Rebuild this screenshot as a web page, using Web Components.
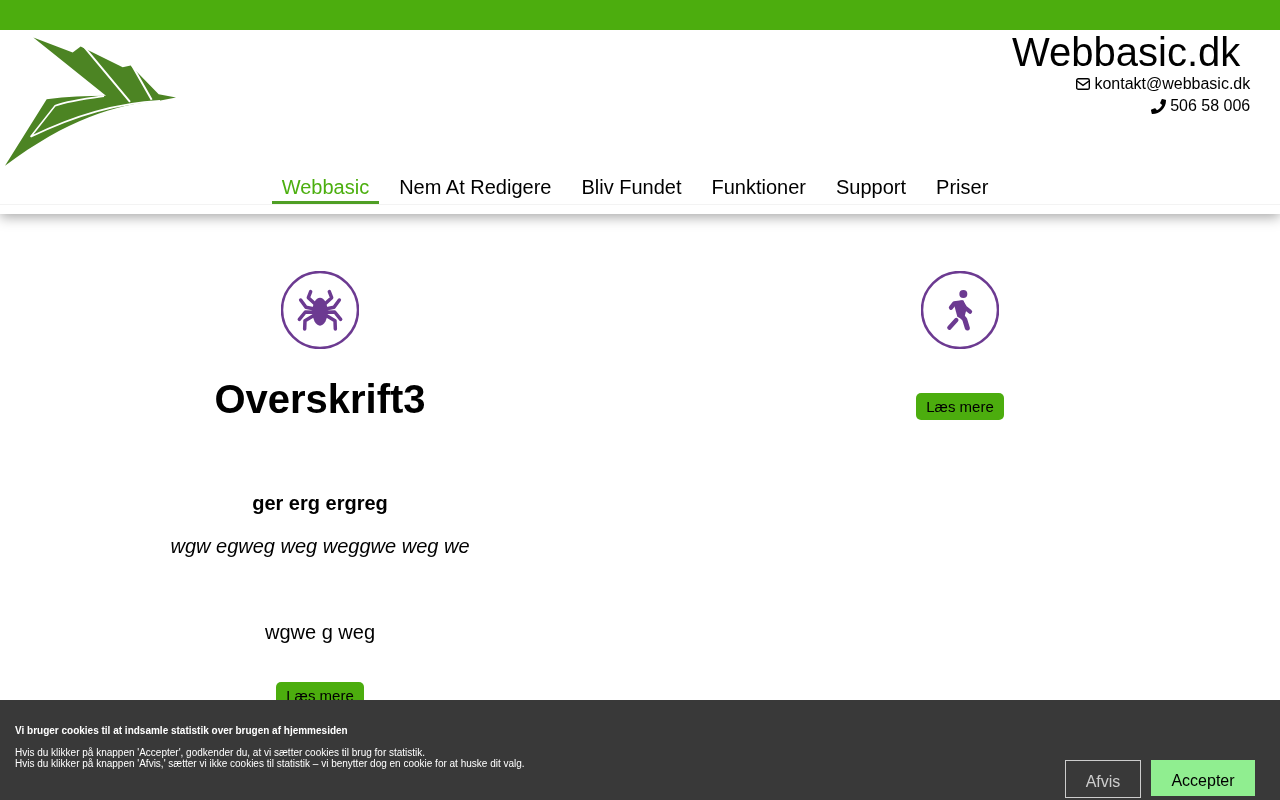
<!DOCTYPE html>
<html lang="da"><head><meta charset="utf-8"><title>Webbasic.dk</title>
<style>
html,body{margin:0;padding:0;height:800px;overflow:hidden;background:#fff;font-family:"Liberation Sans",Arial,sans-serif;color:#000}
</style></head><body>
<site-header></site-header>
<feature-grid>
  <feature-col>
    <icon-circle slot="icon" kind="spider"></icon-circle>
    <h-title>Overskrift3</h-title>
    <sub-title>ger erg ergreg</sub-title>
    <em-line>wgw egweg weg weggwe weg we</em-line>
    <plain-line>wgwe g weg</plain-line>
    <read-more>Læs mere</read-more>
  </feature-col>
  <feature-col>
    <icon-circle slot="icon" kind="walk"></icon-circle>
    <read-more class="near">Læs mere</read-more>
  </feature-col>
</feature-grid>
<cookie-bar></cookie-bar>
<script>
function def(name, css, html, extra){
  customElements.define(name, class extends HTMLElement{
    constructor(){super();this.attachShadow({mode:'open'}).innerHTML='<style>'+css+'</style>'+(typeof html==='function'?html(this):html);}
    connectedCallback(){ if(extra) extra(this); }
  });
}
def('nav-item',`:host{display:block;padding:0 10px;height:32px;line-height:30px;font-size:20px;border-bottom:3px solid transparent;box-sizing:border-box;white-space:nowrap;margin:0 5px}
:host([active]){color:#4caf0f;border-bottom-color:#4f9f25}`,'<slot></slot>');
def('site-header',`:host{display:block;height:214px;box-sizing:border-box;position:relative;z-index:1;box-shadow:0 3px 12px rgba(0,0,0,.35);background:#fff}
.top{height:30px;background:#4cad0e}
.mid{height:142px;display:flex;justify-content:space-between}
.logo{display:block;margin:7px 0 0 4px;width:174px;height:131px}
.info{padding-right:30px;text-align:right;font-size:16px;line-height:22px;will-change:transform}
.name{font-size:40px;line-height:44px;padding-right:10px;margin-bottom:-1px}
.line{display:flex;justify-content:flex-end;align-items:center;gap:4px}
svg.i{display:block}
nav{display:flex;justify-content:center;height:32px;padding-right:10px;will-change:transform}
.rule{height:10px;background:#fff;border-top:1px solid #f3f3f3;box-sizing:border-box}`,
`<div class="top"></div>
<div class="mid">
<svg class="logo" viewBox="12 36 522 388" aria-hidden="true">
<path fill="#4c8423" d="M100 35L218 80L242 62L368 124L392 119L476 205L528 215L470 226C350 235 200 280 15 420L140 220C200 212 260 210 318 210Z"/>
<path fill="none" stroke="#fff" stroke-width="6" d="M250 60L390 228M396 118L455 222"/>
<path fill="none" stroke="#fff" stroke-width="5" d="M480 225C340 232 210 275 92 333L165 240C205 225 260 218 312 211"/>
</svg>
<div class="info"><div class="name">Webbasic.dk</div>
<div class="line"><svg class="i" width="14" height="12" viewBox="0 0 14 12"><rect x=".7" y=".7" width="12.6" height="10.6" rx="1.6" fill="none" stroke="#000" stroke-width="1.4"/><path d="M1 3L7 7.4L13 3" fill="none" stroke="#000" stroke-width="1.4"/></svg><span>kontakt@webbasic.dk</span></div>
<div class="line"><svg class="i" width="15" height="15" viewBox="0 0 512 512"><path d="M493.4 24.6l-104-24c-11.3-2.6-22.9 3.3-27.5 13.9l-48 112c-4.2 9.8-1.4 21.3 6.9 28l60.6 49.6c-36 76.7-98.9 140.5-177.2 177.2l-49.6-60.6c-6.8-8.3-18.2-11.1-28-6.9l-112 48C3.9 366.5-2 378.1.6 389.4l24 104C27.1 504.2 36.7 512 48 512c256.1 0 464-207.5 464-464 0-11.2-7.7-20.9-18.6-23.4z"/></svg><span>506 58 006</span></div>
</div></div>
<nav><nav-item active>Webbasic</nav-item><nav-item>Nem At Redigere</nav-item><nav-item>Bliv Fundet</nav-item><nav-item>Funktioner</nav-item><nav-item>Support</nav-item><nav-item>Priser</nav-item></nav>
<div class="rule"></div>`);
const glyphs={
spider:`<g fill="none" stroke="#6c3a91" stroke-width="10.5" stroke-linecap="round" stroke-linejoin="round">
<path d="M122 95L115 113L133 130M178 95L185 113L167 130M92 120L108 142L130 146M208 120L192 142L170 146M88 178L106 156L130 157M212 178L194 156L170 157M104 207L105 182L130 167M196 207L195 182L170 167"/></g>
<ellipse cx="150" cy="155" rx="23" ry="42" fill="#6c3a91"/>`,
walk:`<circle cx="160" cy="102" r="12" fill="#6c3a91"/>
<path fill="#6c3a91" d="M130 126L160 121L170 146L161 180L142 170Z"/>
<g fill="none" stroke="#6c3a91" stroke-linecap="round" stroke-linejoin="round">
<path stroke-width="13" d="M123 143L133 130L155 127L165 143L180 155M118 203L139 180"/>
<path stroke-width="15" d="M150 162L164 178L172 204"/></g>`};
def('icon-circle',`:host{display:block;width:78px;height:78px;margin:0 auto}svg{display:block}`,
 el=>`<svg width="78" height="78" viewBox="33 33 234 234"><circle cx="150" cy="150" r="114" fill="none" stroke="#6c3a91" stroke-width="7.5"/>${glyphs[el.getAttribute('kind')]}</svg>`);
def('feature-grid',`:host{display:grid;grid-template-columns:1fr 1fr;padding-top:57px;will-change:transform}`,'<slot></slot>');
def('feature-col',`:host{display:flex;flex-direction:column;align-items:center;text-align:center}`,'<slot name="icon"></slot><slot></slot>');
def('h-title',`:host{display:block;font-size:40px;font-weight:bold;line-height:46px;margin-top:27px}`,'<slot></slot>');
def('sub-title',`:host{display:block;font-size:20px;font-weight:bold;line-height:24px;margin-top:69px}`,'<slot></slot>');
def('em-line',`:host{display:block;font-size:20px;font-style:italic;line-height:24px;margin-top:19px}`,'<slot></slot>');
def('plain-line',`:host{display:block;font-size:20px;line-height:24px;margin-top:62px}`,'<slot></slot>');
def('read-more',`:host{display:block;width:88px;height:27px;line-height:27px;font-size:15px;background:#4cad0e;border-radius:5px;margin-top:38px;text-align:center}
:host(.near){margin-top:44px}`,'<slot></slot>');
def('cookie-bar',`:host{position:fixed;left:0;right:0;bottom:0;height:100px;background:#393939;color:#fff;z-index:5;font-size:10px;line-height:11px;display:flex;justify-content:space-between;box-sizing:border-box;padding:0 25px 0 15px}
.txt{will-change:transform}
.t{font-weight:bold;margin:25px 0 11px}
.b{display:flex;gap:10px;align-items:flex-start;padding-top:60px;will-change:transform}
.b span{display:block;box-sizing:border-box;font-size:16px}
.no{width:76px;height:38px;border:1px solid #ccc;color:#ccc;text-align:center;line-height:41px}
.yes{width:104px;height:36px;background:#90ee90;color:#000;text-align:center;line-height:41px}`,
`<div class="txt"><div class="t">Vi bruger cookies til at indsamle statistik over brugen af hjemmesiden</div>
<div>Hvis du klikker på knappen 'Accepter', godkender du, at vi sætter cookies til brug for statistik.<br>Hvis du klikker på knappen 'Afvis,' sætter vi ikke cookies til statistik – vi benytter dog en cookie for at huske dit valg.</div></div>
<div class="b"><span class="no">Afvis</span><span class="yes">Accepter</span></div>`);
</script>
</body></html>
